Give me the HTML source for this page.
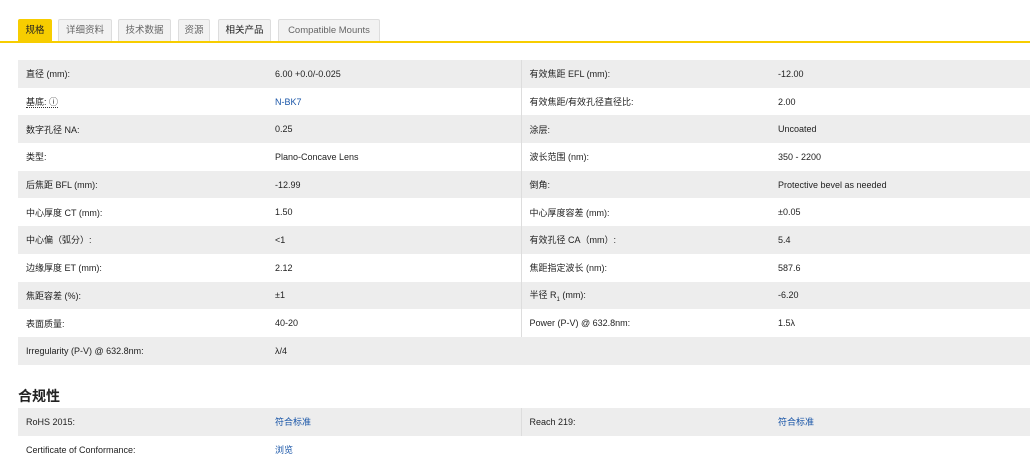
<!DOCTYPE html>
<html><head><meta charset="utf-8"><style>
*{margin:0;padding:0;box-sizing:border-box}
body{width:1030px;height:469px;background:#fff;font-family:"Liberation Sans","Noto Sans CJK SC",sans-serif;font-size:9px;color:#222;position:relative;overflow:hidden}
.tab{position:absolute;top:19px;height:23px;border:1px solid #ddd;border-bottom:none;background:#f2f2f2;color:#666;font-size:9.5px;line-height:22px;text-align:center;border-radius:2px 2px 0 0}
.tab.on{background:#f7cd00;border-color:#f7cd00;color:#222}
.line{position:absolute;top:41px;left:0;width:1030px;height:2px;background:#f7cd00}
table{position:absolute;left:18px;width:1012px;border-collapse:collapse}
td{height:27.7px;padding:0 0 0 8px;vertical-align:middle;white-space:nowrap}
tr.g td{background:#ededed}
td.c1{width:249px}td.c2{width:254px}td.c3{width:249px;border-left:1px solid #ddd}
a{color:#1a56a8;text-decoration:none}
h3{position:absolute;left:18px;top:386px;font-size:14px;font-weight:bold;color:#222}
</style></head><body>
<div class="tab on" style="left:18px;width:34px">规格</div>
<div class="tab" style="left:58px;width:54px">详细资料</div>
<div class="tab" style="left:118px;width:53px">技术数据</div>
<div class="tab" style="left:178px;width:32px">资源</div>
<div class="tab" style="left:218px;width:53px;color:#222">相关产品</div>
<div class="tab" style="left:278px;width:102px">Compatible Mounts</div>
<div class="line"></div>
<table style="top:60px">
<tr class="g"><td class="c1">直径 (mm):</td><td class="c2">6.00 +0.0/-0.025</td><td class="c3">有效焦距 EFL (mm):</td><td>-12.00</td></tr>
<tr><td class="c1"><span style="border-bottom:1px dotted #333">基底: ⓘ</span></td><td class="c2"><a>N-BK7</a></td><td class="c3">有效焦距/有效孔径直径比:</td><td>2.00</td></tr>
<tr class="g"><td class="c1">数字孔径 NA:</td><td class="c2">0.25</td><td class="c3">涂层:</td><td>Uncoated</td></tr>
<tr><td class="c1">类型:</td><td class="c2">Plano-Concave Lens</td><td class="c3">波长范围 (nm):</td><td>350 - 2200</td></tr>
<tr class="g"><td class="c1">后焦距 BFL (mm):</td><td class="c2">-12.99</td><td class="c3">倒角:</td><td>Protective bevel as needed</td></tr>
<tr><td class="c1">中心厚度 CT (mm):</td><td class="c2">1.50</td><td class="c3">中心厚度容差 (mm):</td><td>±0.05</td></tr>
<tr class="g"><td class="c1">中心偏（弧分）:</td><td class="c2">&lt;1</td><td class="c3">有效孔径 CA（mm）:</td><td>5.4</td></tr>
<tr><td class="c1">边缘厚度 ET (mm):</td><td class="c2">2.12</td><td class="c3">焦距指定波长 (nm):</td><td>587.6</td></tr>
<tr class="g"><td class="c1">焦距容差 (%):</td><td class="c2">±1</td><td class="c3">半径 R<sub style="font-size:6px">1</sub> (mm):</td><td>-6.20</td></tr>
<tr><td class="c1">表面质量:</td><td class="c2">40-20</td><td class="c3">Power (P-V) @ 632.8nm:</td><td>1.5λ</td></tr>
<tr class="g"><td class="c1">Irregularity (P-V) @ 632.8nm:</td><td class="c2">λ/4</td><td class="c3" style="border-left:none"></td><td></td></tr>
</table>
<h3>合规性</h3>
<table style="top:408px">
<tr class="g"><td class="c1">RoHS 2015:</td><td class="c2"><a>符合标准</a></td><td class="c3">Reach 219:</td><td><a>符合标准</a></td></tr>
<tr><td class="c1">Certificate of Conformance:</td><td class="c2"><a>浏览</a></td><td class="c3" style="border-left:none"></td><td></td></tr>
</table>
</body></html>
